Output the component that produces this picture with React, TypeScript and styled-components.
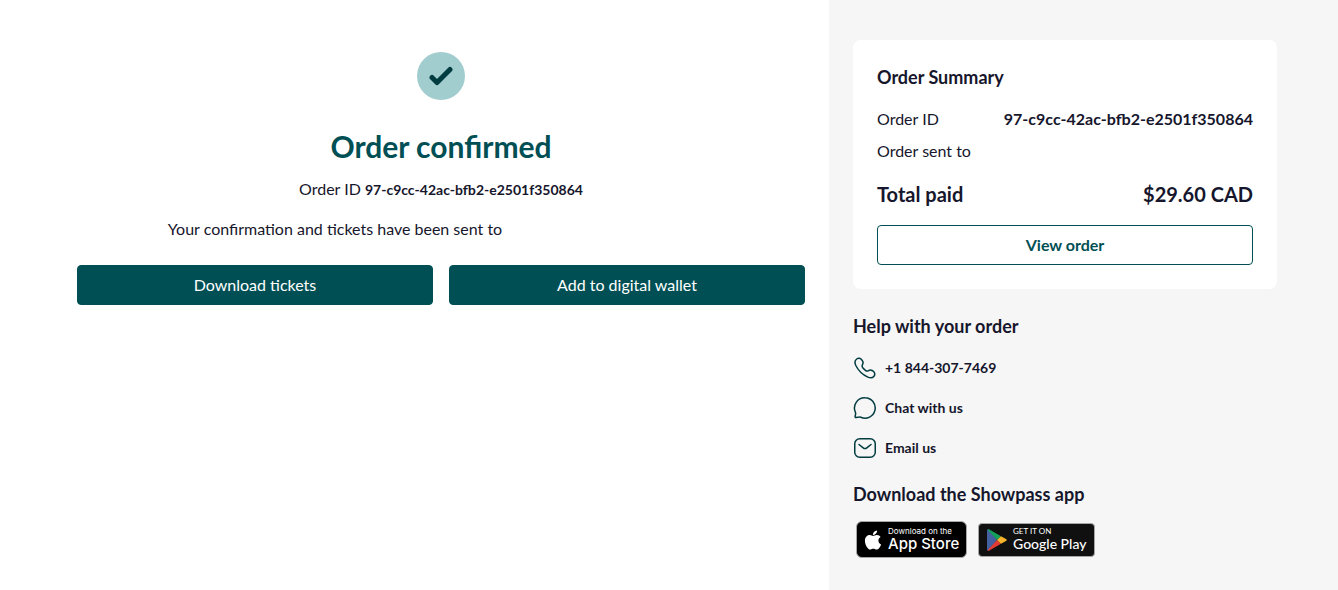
import React from 'react';
import styled, { createGlobalStyle } from 'styled-components';
import { FaApple } from 'react-icons/fa';

const teal = '#004f54';
const darkTeal = '#003c40';
const ink = '#16162c';

const GlobalStyle = createGlobalStyle`
  *, *::before, *::after { box-sizing: border-box; }
  body {
    margin: 0;
    background: #fff;
    color: ${ink};
    font: 400 16px/24px Lato, "Liberation Sans", sans-serif;
  }
  h1, h2, p, dl, dd, ul { margin: 0; padding: 0; }
`;

const Page = styled.div`
  display: grid;
  grid-template-columns: minmax(0, 1fr) 509px;
  min-height: 100vh;
  @media (max-width: 900px) {
    grid-template-columns: minmax(0, 1fr);
  }
`;

const Main = styled.main`
  display: flex;
  flex-direction: column;
  align-items: center;
  padding: 52px 24px 40px 77px;
  @media (max-width: 900px) {
    padding: 40px 24px;
  }
`;

const CheckBadge = styled.div`
  display: flex;
  align-items: center;
  justify-content: center;
  width: 48px;
  height: 48px;
  border-radius: 50%;
  background: #a1cdcf;
`;

const Title = styled.h1`
  margin-top: 24px;
  font-size: 30px;
  line-height: 44px;
  font-weight: 700;
  color: ${teal};
`;

const OrderLine = styled.p`
  margin-top: 9px;
`;

const OrderNumber = styled.strong`
  font-size: 14px;
  line-height: 16px;
  font-weight: 700;
`;

const SentLine = styled.p`
  display: flex;
  flex-wrap: wrap;
  margin-top: 16px;
`;

const Recipient = styled.span`
  width: 212px;
`;

const Actions = styled.div`
  display: flex;
  gap: 16px;
  width: 100%;
  margin-top: 24px;
`;

const Button = styled.button<{ $outline?: boolean }>`
  width: 100%;
  height: 40px;
  padding: 0 16px;
  border: 1px solid ${teal};
  border-radius: 4px;
  background: ${p => (p.$outline ? '#fff' : teal)};
  color: ${p => (p.$outline ? teal : '#fff')};
  font: inherit;
  font-weight: ${p => (p.$outline ? 700 : 400)};
  cursor: pointer;
`;

const Sidebar = styled.aside`
  padding: 40px 61px 32px 24px;
  background: #f6f6f6;
  @media (max-width: 900px) {
    padding: 24px;
  }
`;

const Card = styled.section`
  display: flex;
  flex-direction: column;
  padding: 24px;
  border-radius: 8px;
  background: #fff;
`;

const Heading = styled.h2`
  font-size: 18px;
  line-height: 26px;
  font-weight: 700;
`;

const Details = styled.dl`
  display: flex;
  flex-direction: column;
  gap: 8px;
  margin: 17px 0 16px;
`;

const DetailRow = styled.div<{ $total?: boolean }>`
  display: flex;
  justify-content: space-between;
  margin-top: ${p => (p.$total ? '8px' : '0')};
  font-size: ${p => (p.$total ? '20px' : '16px')};
  line-height: ${p => (p.$total ? '30px' : '24px')};
  font-weight: ${p => (p.$total ? 700 : 400)};
`;

const Value = styled.dd`
  font-weight: 700;
`;

const Section = styled.section`
  margin-top: 24px;
`;

const AppSection = styled(Section)`
  margin-top: 21px;
`;

const HelpList = styled.ul`
  display: flex;
  flex-direction: column;
  gap: 16px;
  margin-top: 17px;
  list-style: none;
`;

const HelpLink = styled.a`
  display: inline-flex;
  align-items: center;
  gap: 8px;
  height: 24px;
  color: ${ink};
  font-size: 14px;
  font-weight: 700;
  text-decoration: none;
  vertical-align: top;
`;

const LineIcon = styled.svg`
  width: 24px;
  height: 24px;
  fill: none;
  stroke: ${darkTeal};
  stroke-width: 1.5;
  stroke-linecap: round;
  stroke-linejoin: round;
`;

const Stores = styled.div`
  display: flex;
  align-items: center;
  gap: 11px;
  margin-top: 14px;
  padding-left: 3px;
`;

const StoreBadge = styled.a<{ $play?: boolean }>`
  display: flex;
  align-items: center;
  gap: ${p => (p.$play ? '6px' : '4px')};
  width: ${p => (p.$play ? '117px' : '111px')};
  height: ${p => (p.$play ? '34px' : '37px')};
  padding-left: ${p => (p.$play ? '8px' : '5px')};
  border: 1px solid #a6a6a6;
  border-radius: ${p => (p.$play ? '4px' : '6px')};
  background: ${p => (p.$play ? '#101010' : '#000')};
  color: #fff;
  font-family: ${p => (p.$play ? 'Lato' : 'Inter')}, sans-serif;
  text-decoration: none;
  white-space: nowrap;
`;

const StoreText = styled.span`
  display: flex;
  flex-direction: column;
`;

const StoreSmall = styled.span`
  font-size: 8px;
  line-height: 8px;
`;

const StoreName = styled.span<{ $play?: boolean }>`
  font-size: ${p => (p.$play ? '14px' : '15px')};
  line-height: 17px;
  font-weight: 500;
`;

export default function App() {
  return (
    <>
      <GlobalStyle />
      <Page>
        <Main>
          <CheckBadge>
            <svg width="24" height="24" viewBox="0 0 24 24" fill="none" stroke={darkTeal} strokeWidth="5" strokeLinecap="round" strokeLinejoin="round" aria-hidden="true">
              <path d="M3 13.500l5 5L21 5.500" />
            </svg>
          </CheckBadge>
          <Title>Order confirmed</Title>
          <OrderLine>
            Order ID <OrderNumber>97-c9cc-42ac-bfb2-e2501f350864</OrderNumber>
          </OrderLine>
          <SentLine>
            Your confirmation and tickets have been sent to
            <Recipient />
          </SentLine>
          <Actions>
            <Button type="button">Download tickets</Button>
            <Button type="button">Add to digital wallet</Button>
          </Actions>
        </Main>
        <Sidebar>
          <Card>
            <Heading>Order Summary</Heading>
            <Details>
              <DetailRow>
                <dt>Order ID</dt>
                <Value>97-c9cc-42ac-bfb2-e2501f350864</Value>
              </DetailRow>
              <DetailRow>
                <dt>Order sent to</dt>
                <Value />
              </DetailRow>
              <DetailRow $total>
                <dt>Total paid</dt>
                <Value>$29.60 CAD</Value>
              </DetailRow>
            </Details>
            <Button type="button" $outline>View order</Button>
          </Card>
          <Section>
            <Heading>Help with your order</Heading>
            <HelpList>
              <li>
                <HelpLink href="tel:+18443077469">
                  <LineIcon viewBox="0 0 24 24" aria-hidden="true">
                    <path d="M2.700 9.200C1.500 6.500 2 4.200 3.700 3c1.700-1.200 4-.8 5.100.900l.8 1.300c.7 1.200.600 2.400-.1 3.500-.6 1-.4 2.100.3 3.100.8 1 1.600 1.800 2.600 2.500 1 .8 2.100.9 3.100.3 1.100-.7 2.300-.8 3.500-.1l1.100.7c1.800 1.100 2.200 3.400.9 5-1.400 1.700-3.600 2-6.100.9-5.300-2.400-9.700-6.700-12.200-11.900z" />
                  </LineIcon>
                  +1 844-307-7469
                </HelpLink>
              </li>
              <li>
                <HelpLink href="#chat">
                  <LineIcon viewBox="0 0 24 24" aria-hidden="true">
                    <path d="M12 1.800a10.200 10.200 0 1 1-4.200 19.500c-.5-.2-1-.3-1.500-.2l-3.300.5c-.6.1-1-.4-.9-1l.5-2.800c.1-.6 0-1.100-.2-1.600A10.200 10.200 0 0 1 12 1.800z" />
                  </LineIcon>
                  Chat with us
                </HelpLink>
              </li>
              <li>
                <HelpLink href="#email">
                  <LineIcon viewBox="0 0 24 24" aria-hidden="true">
                    <rect x="1.750" y="2.750" width="20.500" height="18.500" rx="5" />
                    <path d="M6 8.500l4.200 3.300c1.100.9 2.500.9 3.600 0L18 8.500" />
                  </LineIcon>
                  Email us
                </HelpLink>
              </li>
            </HelpList>
          </Section>
          <AppSection>
            <Heading>Download the Showpass app</Heading>
            <Stores>
              <StoreBadge href="#app-store">
                <FaApple size={22} aria-hidden="true" />
                <StoreText>
                  <StoreSmall>Download on the</StoreSmall>
                  <StoreName>App Store</StoreName>
                </StoreText>
              </StoreBadge>
              <StoreBadge href="#google-play" $play>
                <svg width="20" height="22" viewBox="0 0 20 22" aria-hidden="true">
                  <path d="M0 1.500Q.3 0 1.800.300L10 11 1.800 21.700Q.3 22 0 20.500z" fill="#4560a0" />
                  <path d="M.4.600Q1.200-.200 2.400.500L14 7.200 10 11z" fill="#12a05a" />
                  <path d="M.4 21.400Q1.200 22.200 2.400 21.500L14 14.800 10 11z" fill="#e33b32" />
                  <path d="M14 7.200l5 2.800q1.500 1 0 2l-5 2.800L10 11z" fill="#f7b32b" />
                </svg>
                <StoreText>
                  <StoreSmall>GET IT ON</StoreSmall>
                  <StoreName $play>Google Play</StoreName>
                </StoreText>
              </StoreBadge>
            </Stores>
          </AppSection>
        </Sidebar>
      </Page>
    </>
  );
}
